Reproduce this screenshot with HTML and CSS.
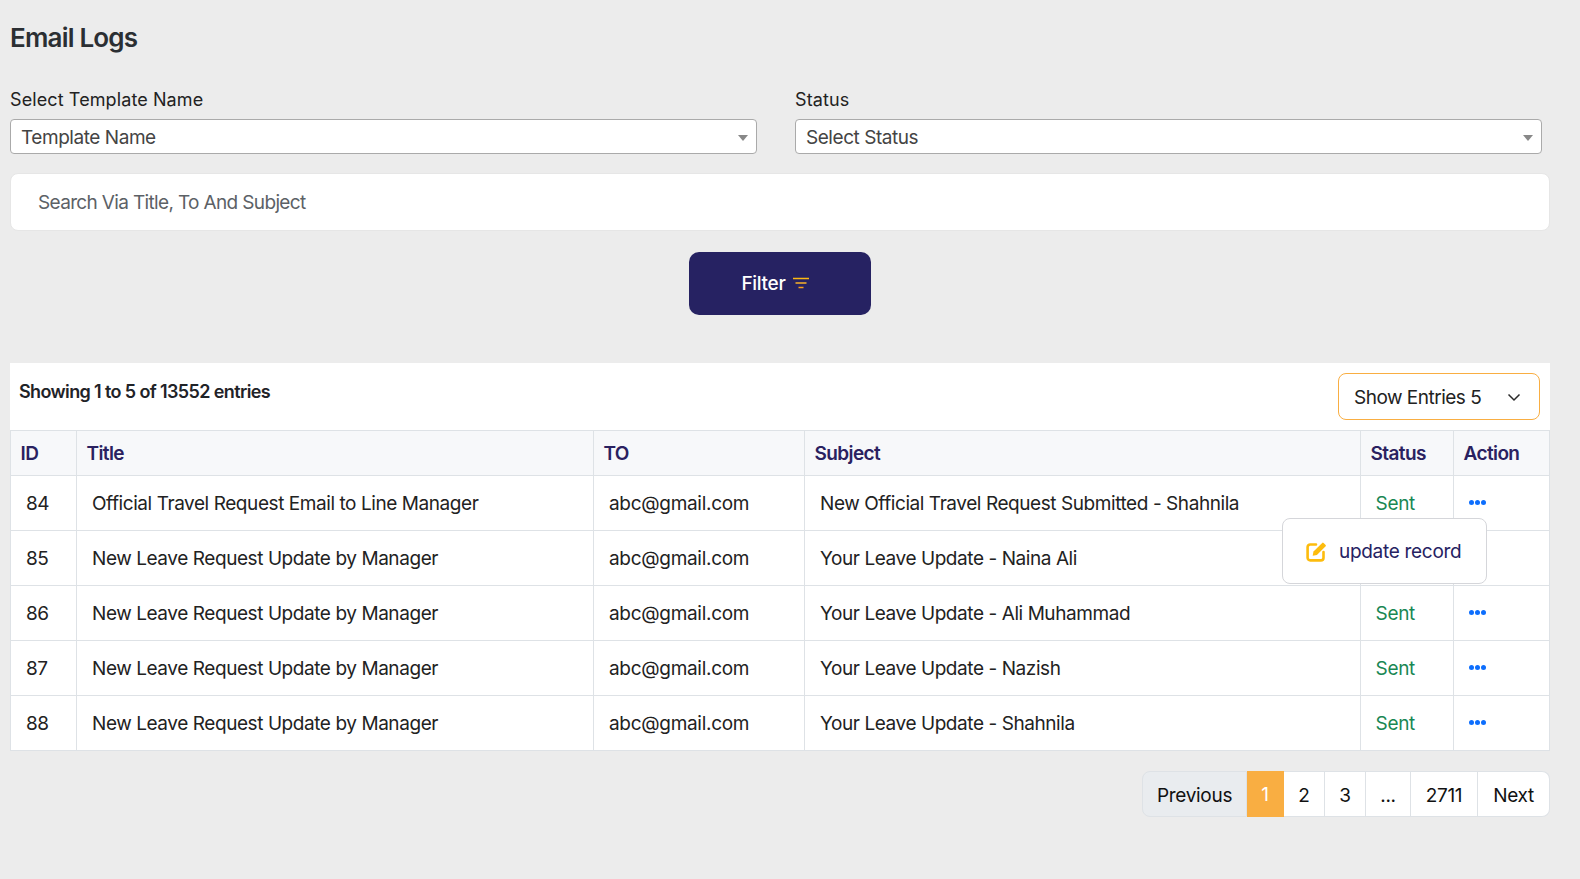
FILE: index.html
```html
<!DOCTYPE html>
<html lang="en">
<head>
<meta charset="utf-8">
<title>Email Logs</title>
<link rel="stylesheet" href="styles.css">
</head>
<body>
<main class="page">
  <h1 class="title">Email Logs</h1>
  <div class="filters">
    <div class="field">
      <label class="label">Select Template Name</label>
      <div class="select"><span>Template Name</span><i class="caret"></i></div>
    </div>
    <div class="field">
      <label class="label">Status</label>
      <div class="select"><span>Select Status</span><i class="caret"></i></div>
    </div>
  </div>
  <div class="search">Search Via Title, To And Subject</div>
  <div class="filter-wrap">
    <button class="filter-btn">Filter
      <svg class="filter-icon" width="16" height="12" viewBox="0 0 16 12" fill="none" stroke-width="1.5"><path stroke="#fdb913" d="M0 1.5h16"/><path stroke="#fbb32a" d="M2.5 6h11"/><path stroke="#f9a01b" d="M5.5 10.5h5"/></svg>
    </button>
  </div>
  <section class="card">
    <div class="card-head">
      <div class="showing">Showing 1 to 5 of 13552 entries</div>
      <div class="entries">Show Entries 5
        <svg width="14" height="9" viewBox="0 0 14 9" fill="none" stroke="#2a2a2a" stroke-width="1.5"><path d="M1.5 1.5 7 7l5.5-5.5"/></svg>
      </div>
    </div>
    <table class="table">
      <colgroup><col class="c-id"><col class="c-title"><col class="c-to"><col class="c-subject"><col class="c-status"><col class="c-action"></colgroup>
      <thead><tr><th>ID</th><th>Title</th><th>TO</th><th>Subject</th><th>Status</th><th>Action</th></tr></thead>
      <tbody>
        <tr><td>84</td><td>Official Travel Request Email to Line Manager</td><td class="mail">abc@gmail.com</td><td>New Official Travel Request Submitted - Shahnila</td><td class="sent">Sent</td>
          <td class="act"><span class="dots"><i></i><i></i><i></i></span>
            <div class="menu">
              <svg class="edit" width="21" height="21" viewBox="0 0 21 21" fill="none"><path d="M10 3.5H4.2A2.6 2.6 0 0 0 1.6 6.1v10.7a2.6 2.6 0 0 0 2.6 2.6h10.7a2.6 2.6 0 0 0 2.6-2.6V11" stroke="#fdbc0d" stroke-width="2.6" stroke-linecap="round"/><path d="M7.5 10.6 16.2 1.9a1 1 0 0 1 1.4 0l2 2a1 1 0 0 1 0 1.4l-8.7 8.7-4.2.8z" fill="#fdbc0d"/></svg>
              <span>update record</span>
            </div>
          </td></tr>
        <tr><td>85</td><td>New Leave Request Update by Manager</td><td class="mail">abc@gmail.com</td><td>Your Leave Update - Naina Ali</td><td class="sent">Sent</td><td class="act"><span class="dots"><i></i><i></i><i></i></span></td></tr>
        <tr><td>86</td><td>New Leave Request Update by Manager</td><td class="mail">abc@gmail.com</td><td>Your Leave Update - Ali Muhammad</td><td class="sent">Sent</td><td class="act"><span class="dots"><i></i><i></i><i></i></span></td></tr>
        <tr><td>87</td><td>New Leave Request Update by Manager</td><td class="mail">abc@gmail.com</td><td>Your Leave Update - Nazish</td><td class="sent">Sent</td><td class="act"><span class="dots"><i></i><i></i><i></i></span></td></tr>
        <tr><td>88</td><td>New Leave Request Update by Manager</td><td class="mail">abc@gmail.com</td><td>Your Leave Update - Shahnila</td><td class="sent">Sent</td><td class="act"><span class="dots"><i></i><i></i><i></i></span></td></tr>
      </tbody>
    </table>
  </section>
  <nav class="pager">
    <a class="pg prev">Previous</a><a class="pg active">1</a><a class="pg w2">2</a><a class="pg w3">3</a><a class="pg w4">...</a><a class="pg w5">2711</a><a class="pg next">Next</a>
  </nav>
</main>
</body>
</html>
```
FILE: styles.css
```css
* { box-sizing: border-box; }
html, body { margin: 0; height: 100%; }
body { background: #ececec; font-family: Inter, "Noto Sans", sans-serif; color: #212529; overflow: hidden; }
.page { padding: 0 30px 0 10px; }
.title { margin: 0; padding-top: 21px; height: 88px; font-size: 26px; line-height: 34px; font-weight: 600; letter-spacing: -.8px; color: #2b2f33; }
.filters { display: flex; gap: 38px; padding-right: 8px; }
.field { flex: 1; }
.label { display: block; font-size: 18px; line-height: 24px; height: 31px; letter-spacing: .1px; color: #222; }
.select { height: 35px; border: 1px solid #aaa; border-radius: 4px; background: #fff; display: flex; align-items: center; justify-content: space-between; padding: 2px 8px 0 10px; font-size: 19px; letter-spacing: -.45px; color: #444; }
.caret { border: 5px solid transparent; border-top: 6px solid #888; border-bottom: 0; }
.search { margin-top: 19px; height: 58px; background: #fff; border: 1px solid #e6e6e6; border-radius: 8px; padding: 0 27px; display: flex; align-items: center; font-size: 19px; letter-spacing: -.65px; color: #5c6166; }
.filter-wrap { display: flex; justify-content: center; margin-top: 21px; }
.filter-btn { width: 182px; height: 63px; border: 0; border-radius: 10px; background: #262262; color: #fff; font: 500 19px Inter, sans-serif; letter-spacing: -.3px; display: flex; align-items: center; justify-content: center; gap: 7px; padding: 0 10px 0 0; }
.filter-icon { margin-top: -2px; }
.card { margin-top: 48px; background: #fff; }
.card-head { height: 67px; display: flex; justify-content: space-between; padding: 10px 10px 0 9px; }
.showing { font-size: 18px; font-weight: 600; letter-spacing: -.62px; line-height: 38px; color: #1f2328; }
.entries { width: 202px; height: 47px; border: 1px solid #f9ae42; border-radius: 8px; display: flex; align-items: center; justify-content: space-between; padding: 2px 18px 0 15px; font-size: 19px; letter-spacing: -.5px; color: #222; }
.table { width: 100%; table-layout: fixed; border-collapse: collapse; font-size: 19px; letter-spacing: -.43px; }
.c-id { width: 66px; } .c-title { width: 517px; } .c-to { width: 211px; } .c-subject { width: 556px; } .c-status { width: 93px; }
th, td { border: 1px solid #dee2e6; text-align: left; }
th { height: 45px; background: #f7f8fa; padding: 0 10px 0 9.5px; font-weight: 600; letter-spacing: -.6px; color: #2a2160; }
td { height: 55px; padding: 0 15px; color: #222; }
td.mail { letter-spacing: -.3px; }
td.sent { color: #198754; letter-spacing: -.3px; padding-left: 14.5px; }
.act { position: relative; }
.dots { display: flex; gap: 1px; margin-top: -2px; }
.dots i { width: 5px; height: 5px; border-radius: 50%; background: #0d6efd; }
.menu { position: absolute; z-index: 2; left: -172px; top: 42px; width: 205px; height: 66px; background: #fff; border: 1px solid #d5d6da; border-radius: 8px; display: flex; align-items: center; gap: 12px; padding-left: 23px; color: #262262; letter-spacing: -.3px; }
.edit { flex: none; }
.pager { margin-top: 20px; display: flex; justify-content: flex-end; font-size: 19px; letter-spacing: -.3px; color: #111; }
.pg { height: 46px; display: flex; align-items: center; justify-content: center; padding-top: 2px; background: #fff; border: 1px solid #dee2e6; border-left: 0; }
.prev { width: 105px; background: #e9ecef; border-left: 1px solid #dee2e6; border-radius: 8px 0 0 8px; }
.active { width: 37px; background: #f9ae42; border-color: #f9ae42; color: #fff; padding-top: 0; }
.w2 { width: 41px; } .w3 { width: 41px; } .w4 { width: 45px; } .w5 { width: 67px; }
.next { width: 72px; border-radius: 0 8px 8px 0; }
```
